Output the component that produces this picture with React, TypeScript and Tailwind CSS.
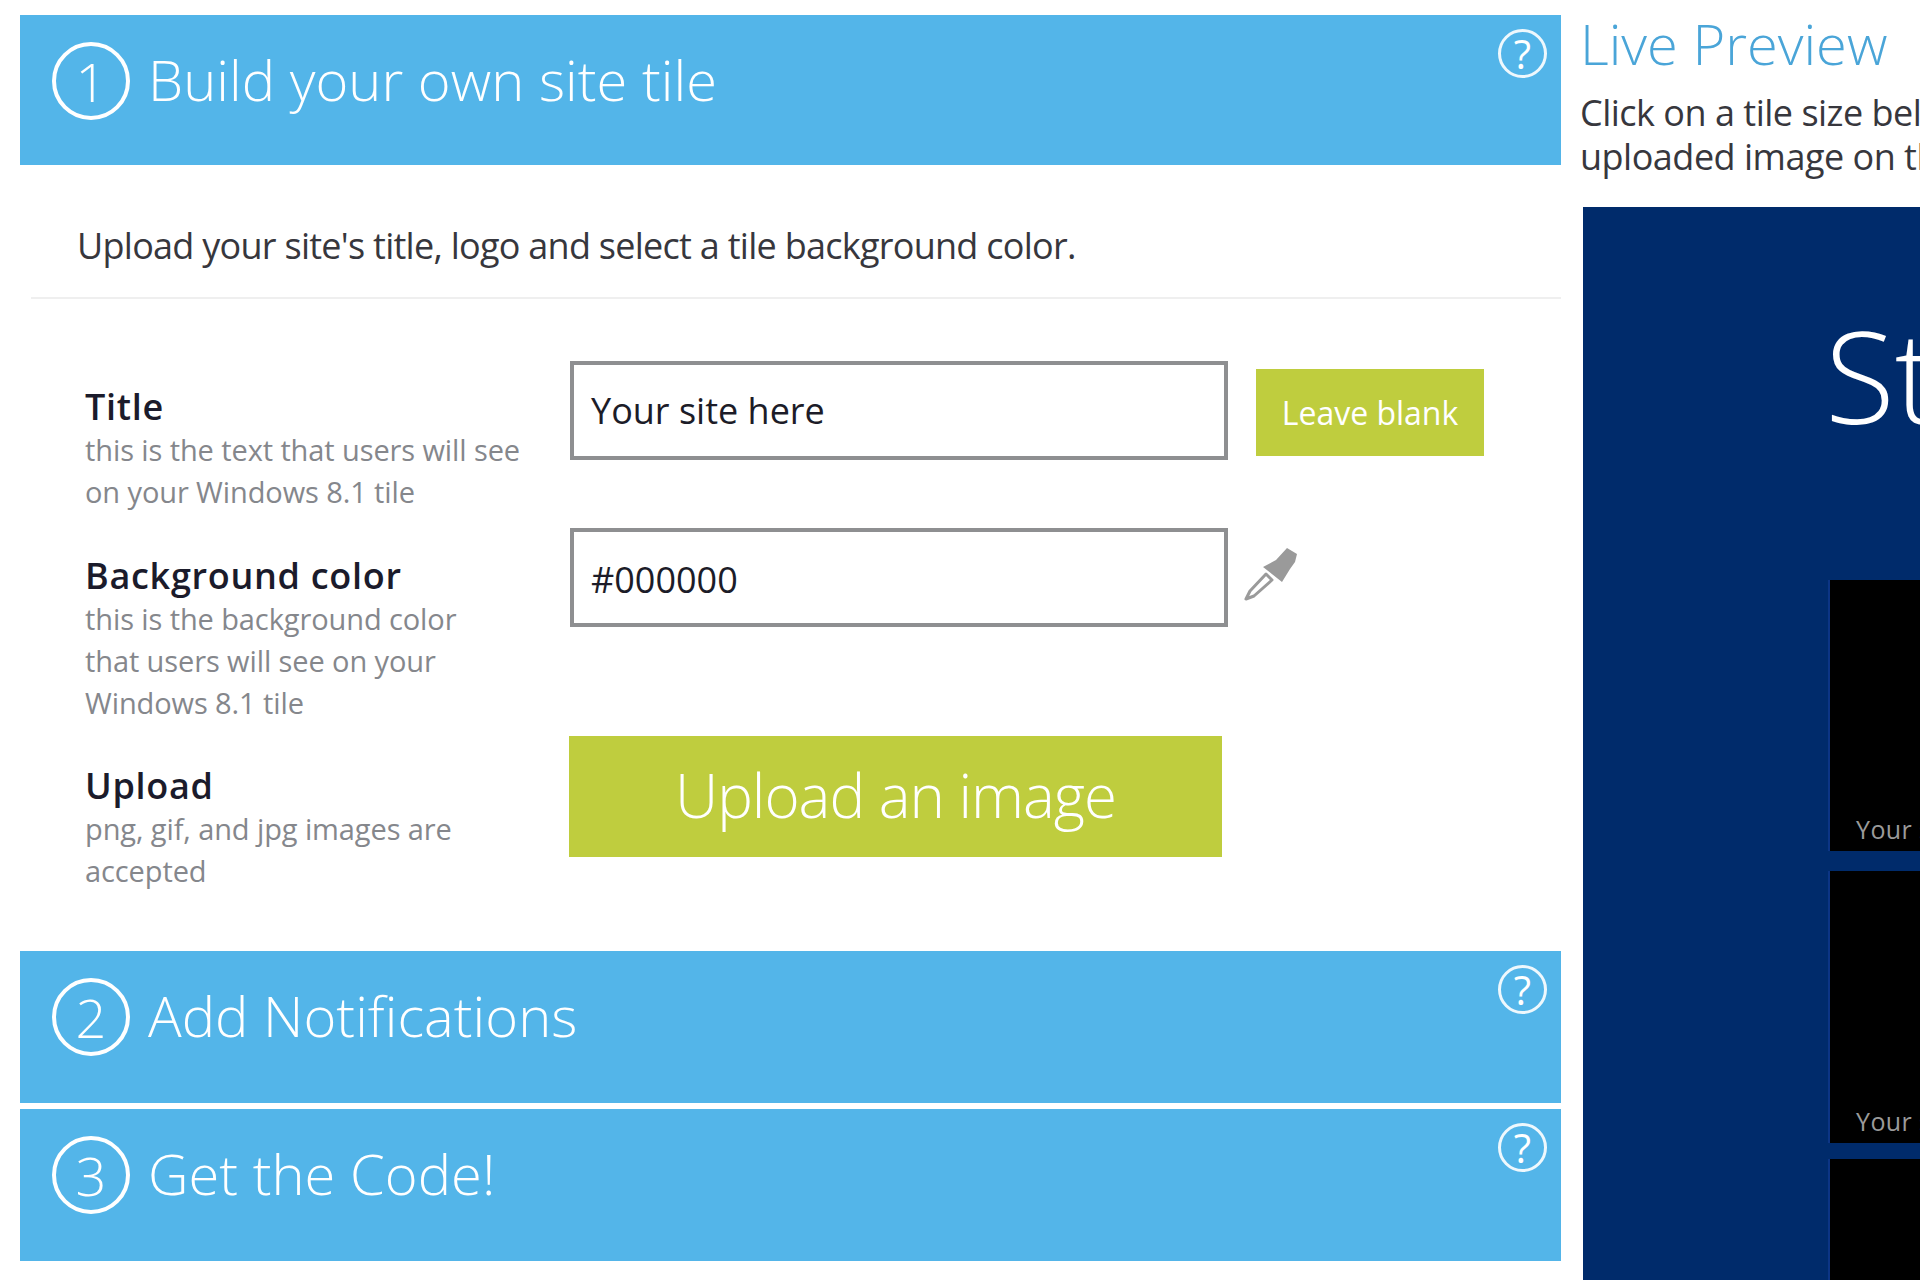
import React from 'react';

const FONT = "font-['Open_Sans','Noto_Sans',sans-serif]";

// --- Blue step header ---
const StepBanner: React.FC<{ step: number; title: string; height: string }> = ({ step, title, height }) => (
  <div className={`relative ${height} bg-[#53b5e9] pl-[32px] pt-[27px] text-white`}>
    <div className="flex items-center">
      <div className="flex h-[78px] w-[78px] items-center justify-center rounded-full border-[4px] border-white text-[54px] font-light leading-none">
        {step}
      </div>
      <h2 className="-mt-[5px] ml-[18px] text-[56px] font-light leading-[78px] tracking-[0.05px]">{title}</h2>
    </div>
    <div className="absolute right-[14px] top-[14px] flex h-[49px] w-[49px] items-center justify-center rounded-full border-[3px] border-white/90 text-[40px] font-medium leading-none">
      ?
    </div>
  </div>
);

const FieldLabel: React.FC<{ title: string; lines: string[]; top: string }> = ({ title, lines, top }) => (
  <div className={`-ml-px w-[485px] shrink-0 ${top}`}>
    <div className="text-[36px] font-semibold leading-[45px] tracking-[0.7px] text-[#1b1b2b]">{title}</div>
    {lines.map((line) => (
      <div key={line} className="text-[29px] leading-[42px] tracking-[-0.1px] text-[#85878c]">
        {line}
      </div>
    ))}
  </div>
);

const TextBox: React.FC<{ value: string; top: string }> = ({ value, top }) => (
  <div className={`flex h-[99px] w-[658px] shrink-0 items-center border-[4px] border-[#8e8f91] bg-white pl-[17px] text-[36px] text-[#1c1c28] ${top}`}>
    {value}
  </div>
);

const Eyedropper = () => (
  <svg viewBox="0 0 56 56" className="h-[56px] w-[56px]">
    <path d="M23 27 L7 44 L3 52 L11 49 L29 33 Z" fill="#fff" stroke="#9a9a9a" strokeWidth="3" strokeLinejoin="round" />
    <path d="M44 1 L54 7 L52 15 L47 22 L39 35 L20 20 L33 13 Z" fill="#9a9a9a" />
  </svg>
);

const Tile: React.FC<{ height: string; label?: string }> = ({ height, label }) => (
  <div className={`flex ${height} w-[340px] items-end border-l-2 border-[#0c3585] bg-black pb-[7px] pl-[26px] text-[25px] leading-[30px] tracking-[0.4px] text-[#9a9a9a]`}>
    {label}
  </div>
);

export default function App() {
  return (
    <div className={`flex h-[1280px] w-[1920px] overflow-hidden bg-white ${FONT}`}>
      <div className="ml-[20px] w-[1541px] shrink-0 pt-[15px]">
        <StepBanner step={1} title="Build your own site tile" height="h-[150px]" />

        <div className="ml-[11px] h-[134px] border-b-2 border-[#efefef] pl-[46px] pt-[59px] text-[36px] leading-[44px] tracking-[-0.73px] text-[#37373d]">
          Upload your site's title, logo and select a tile background color.
        </div>

        <div className="pl-[66px] pt-[62px]">
          <div className="flex h-[167px]">
            <FieldLabel title="Title" top="pt-[23px]" lines={['this is the text that users will see', 'on your Windows 8.1 tile']} />
            <TextBox value="Your site here" top="pt-[1px]" />
            <div className="ml-[28px] mt-[8px] flex h-[87px] w-[228px] items-center justify-center bg-[#bfcd3e] text-[32px] tracking-[0px] text-white">
              Leave blank
            </div>
          </div>
          <div className="flex h-[208px]">
            <FieldLabel title="Background color" top="pt-[25px]" lines={['this is the background color', 'that users will see on your', 'Windows 8.1 tile']} />
            <TextBox value="#000000" top="pt-[4px]" />
            <div className="ml-[15px] mt-[19px]">
              <Eyedropper />
            </div>
          </div>
          <div className="flex h-[215px]">
            <FieldLabel title="Upload" top="pt-[27px]" lines={['png, gif, and jpg images are', 'accepted']} />
            <div className="-ml-px flex h-[121px] w-[653px] items-center justify-center bg-[#bfcd3e] pb-[4px] text-[60px] font-light tracking-[-1px] text-white">
              Upload an image
            </div>
          </div>
        </div>

        <StepBanner step={2} title="Add Notifications" height="h-[152px]" />
        <div className="mt-[6px]">
          <StepBanner step={3} title="Get the Code!" height="h-[152px]" />
        </div>
      </div>

      <div className="ml-[19px] flex min-w-0 flex-1 flex-col">
        <h1 className="mt-[10px] whitespace-nowrap text-[56px] font-light leading-[66px] text-[#4aa5d8]">Live Preview</h1>
        <p className="mt-[15px] whitespace-nowrap text-[36px] leading-[44px] tracking-[-0.5px] text-[#37373d]">
          Click on a tile size below to see your
          <br />
          uploaded image on the tile
        </p>
        <div className="ml-[3px] mt-[28px] flex-1 bg-[#002b6b] pl-[245px] text-white">
          <div className="-ml-[3px] h-[373px] whitespace-nowrap pt-[88px] text-[128px] font-light leading-[160px]">Start</div>
          <Tile height="h-[271px]" label="Your site here" />
          <div className="mt-[20px]">
            <Tile height="h-[272px]" label="Your site here" />
          </div>
          <div className="mt-[16px]">
            <Tile height="h-[121px]" />
          </div>
        </div>
      </div>
    </div>
  );
}
